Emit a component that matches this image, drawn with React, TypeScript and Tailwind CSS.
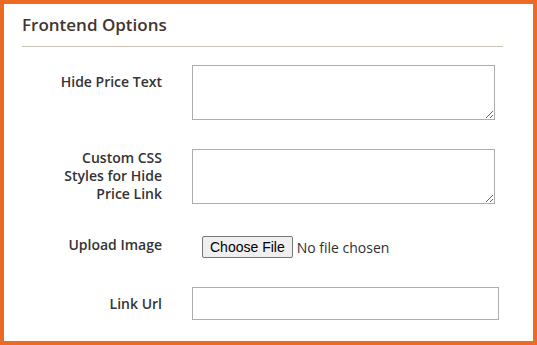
import React from "react";

const labelCls =
  "w-[140px] shrink-0 text-right text-[14px] font-semibold text-[#333333]";

export default function App() {
  return (
    <div
      className="w-[537px] h-[345px] border-4 border-[#eb6b24] bg-white box-border overflow-hidden"
      style={{ fontFamily: '"Open Sans", "Noto Sans", sans-serif' }}
    >
      <div className="pl-[18px] pr-[30px]">
        <div className="pt-[9px] text-[17px] leading-[23px] font-semibold text-[#41362f]">
          Frontend Options
        </div>
        <div className="mt-[10px] border-b border-[#cac3b4]" />

        <div className="mt-[18px] flex items-start h-[55px]">
          <div className={labelCls + " pt-[7px] leading-[19px]"}>Hide Price Text</div>
          <div className="ml-[30px]">
            <textarea className="block w-[303px] h-[55px] border border-[#adadad] bg-white outline-none" />
          </div>
        </div>

        <div className="mt-[29px] flex items-start h-[55px]">
          <div className={labelCls + " pt-0 leading-[18px]"}>
            Custom CSS
            <br />
            Styles for Hide
            <br />
            Price Link
          </div>
          <div className="ml-[30px]">
            <textarea className="block w-[303px] h-[55px] border border-[#adadad] bg-white outline-none" />
          </div>
        </div>

        <div className="mt-[24px] flex items-start h-[30px]">
          <div className={labelCls + " pt-[7px] leading-[19px]"}>Upload Image</div>
          <div className="ml-[40px] mt-[8px] flex items-center">
            <span
              className="h-[22px] px-[7px] flex items-center border border-[#767676] rounded-[2px] bg-[#efefef] text-[14px] text-black"
              style={{ fontFamily: '"Liberation Sans", Arial, sans-serif' }}
            >
              Choose File
            </span>
            <span className="ml-[4px] text-[14px] text-[#303030]">No file chosen</span>
          </div>
        </div>

        <div className="mt-[29px] flex items-start h-[33px]">
          <div className={labelCls + " pt-[7px] leading-[19px]"}>Link Url</div>
          <div className="ml-[30px]">
            <input
              type="text"
              className="block w-[307px] h-[33px] border border-[#adadad] bg-white outline-none"
            />
          </div>
        </div>
      </div>
    </div>
  );
}
